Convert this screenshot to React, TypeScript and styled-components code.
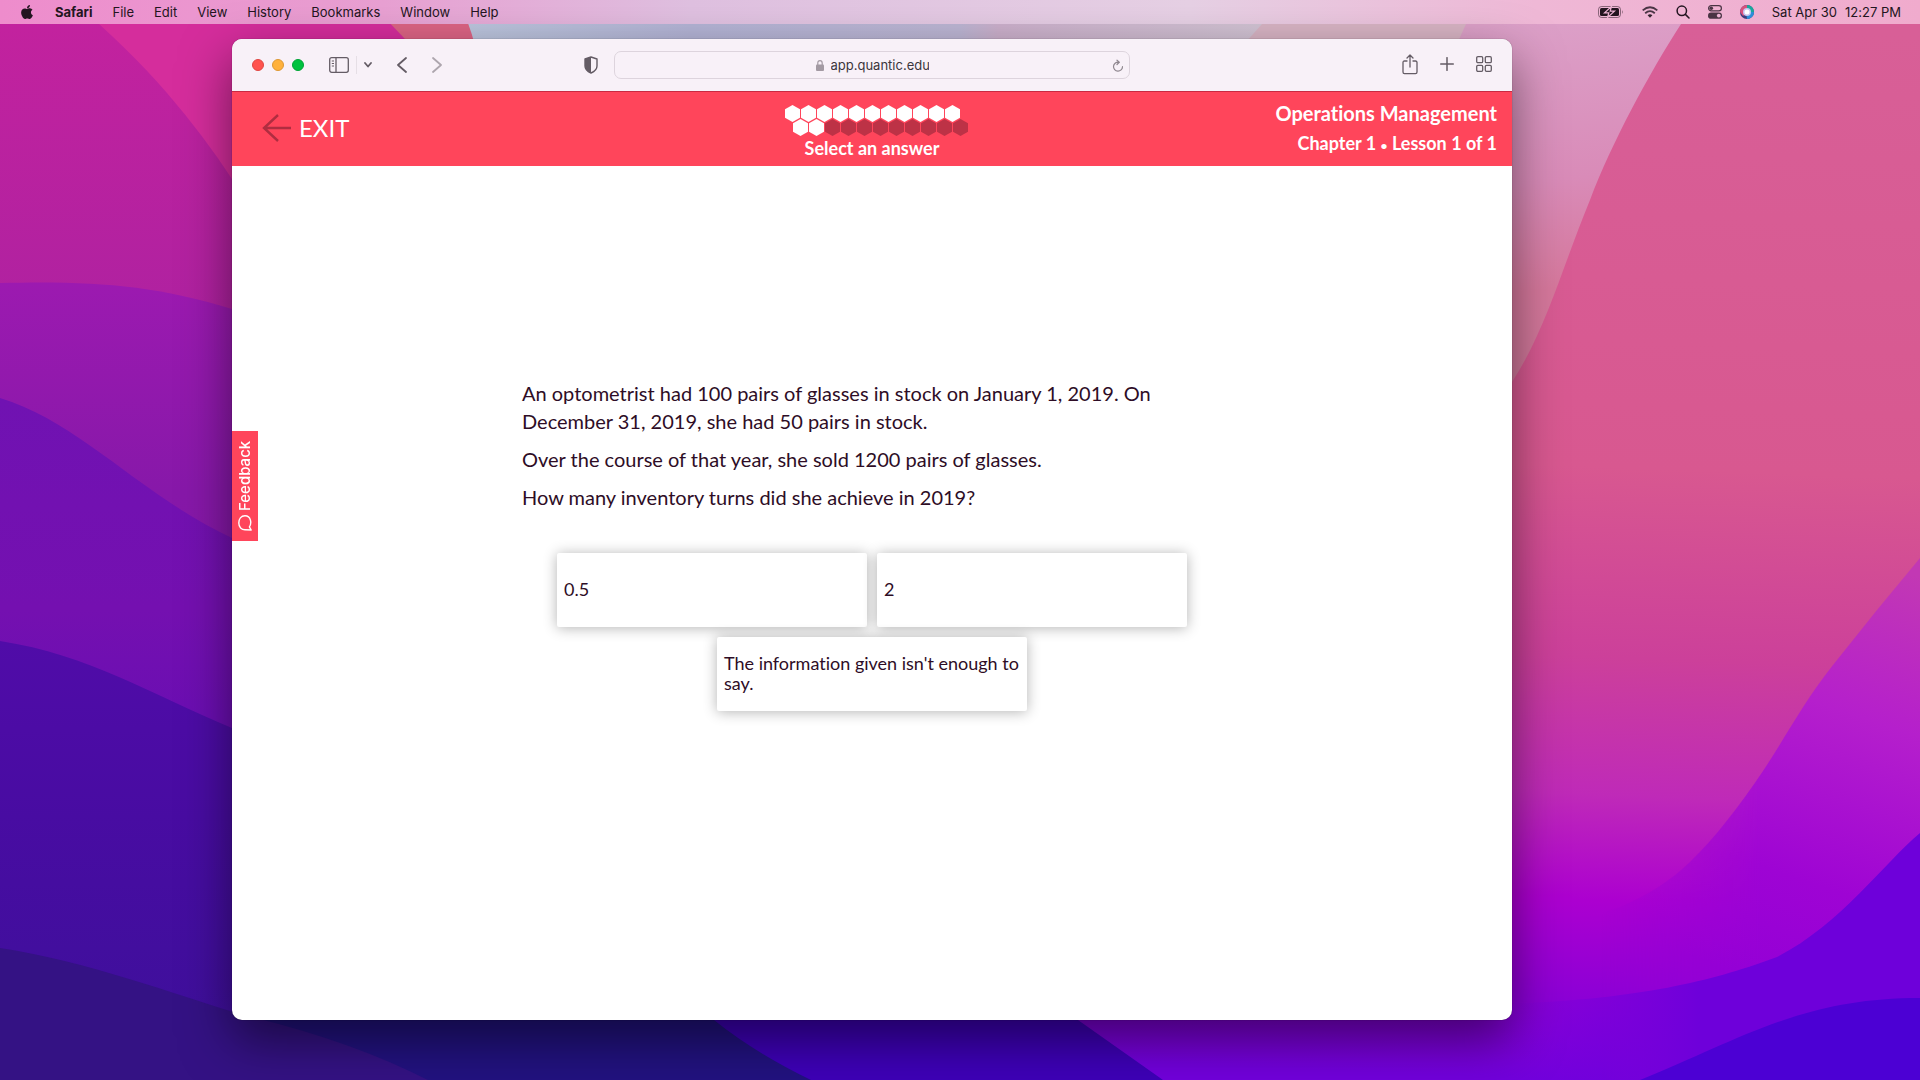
import React from "react";
import styled, { createGlobalStyle } from "styled-components";
import { FaApple } from "react-icons/fa";

const system = `Inter, "Liberation Sans", sans-serif`;
const course = `Lato, "Open Sans", sans-serif`;
const brand = "#ff455b";
const ink = "#2e0d26";

const GlobalStyle = createGlobalStyle`
  *, *::before, *::after { box-sizing: border-box; }
  body { margin: 0; font-family: ${system}; font-variant-ligatures: none; }
  button, input { font: inherit; color: inherit; }
  button { border: 0; padding: 0; background: none; cursor: pointer; font-variant-ligatures: none; }
  svg { display: block; flex: none; }
`;

const Desktop = styled.div`
  position: relative;
  isolation: isolate;
  display: flex;
  flex-direction: column;
  min-height: 100vh;
`;

const WallpaperArt = styled.svg`
  position: absolute;
  inset: 0;
  z-index: -1;
  width: 100%;
  height: 100%;
`;

const MenuBar = styled.header`
  display: flex;
  justify-content: space-between;
  align-items: center;
  height: 24px;
  padding: 0 19px 1px;
  color: #231520;
  font-size: 13px;
  background: linear-gradient(90deg, #ee8ccc 0%, #e8a0d2 20%, #dfc0e0 36%, #e6d0e4 62%, #efb8d6 80%, #f0abcd 100%);
`;

const MenuList = styled.nav`
  display: flex;
  align-items: center;
  gap: 20px;
`;

const MenuItem = styled.button<{ $strong?: boolean }>`
  font-weight: ${(p) => (p.$strong ? 700 : 400)};
  line-height: 22px;
`;

const StatusList = styled.div`
  display: flex;
  align-items: center;
  gap: 18px;
`;

const Clock = styled.time`
  display: flex;
  gap: 8px;
  line-height: 22px;
`;

const Stage = styled.div`
  flex: 1;
  display: flex;
  padding: 15px 408px 60px 232px;
`;

const BrowserWindow = styled.section`
  flex: 1;
  display: flex;
  flex-direction: column;
  overflow: hidden;
  min-width: 0;
  border-radius: 10px;
  background: #fff;
  box-shadow: 0 0 1px rgba(0, 0, 0, 0.6), 0 20px 50px rgba(0, 0, 0, 0.5);
`;

const Toolbar = styled.div`
  display: grid;
  grid-template-columns: 1fr minmax(0, 516px) 1fr;
  align-items: center;
  height: 52px;
  background: #f8f1f8;
  color: #645c65;
`;

const ToolGroup = styled.div<{ $end?: boolean }>`
  display: flex;
  align-items: center;
  justify-content: ${(p) => (p.$end ? "flex-end" : "space-between")};
  gap: 22px;
  padding: ${(p) => (p.$end ? "0 20px 2px" : "0 16px 0 20px")};
`;

const Cluster = styled.div<{ $gap: number }>`
  display: flex;
  align-items: center;
  gap: ${(p) => p.$gap}px;
`;

const Light = styled.button<{ $fill: string; $edge: string }>`
  width: 12px;
  height: 12px;
  border: 1px solid ${(p) => p.$edge};
  border-radius: 50%;
  background: ${(p) => p.$fill};
`;

const NavButton = styled.button<{ $muted?: boolean }>`
  opacity: ${(p) => (p.$muted ? 0.5 : 1)};
`;

const Rule = styled.span`
  width: 1px;
  height: 18px;
  background: #e6dfe6;
`;

const AddressBar = styled.div`
  display: grid;
  grid-template-columns: 1fr auto 1fr;
  align-items: center;
  height: 28px;
  padding: 0 5px;
  border: 1px solid #ddd4dd;
  border-radius: 7px;
`;

const AddressLabel = styled.label`
  grid-column: 2;
  display: flex;
  align-items: center;
  gap: 7px;
  color: #a39aa3;
`;

const AddressInput = styled.input`
  width: 98px;
  padding: 0;
  border: 0;
  outline: 0;
  background: none;
  color: #3c363c;
  font-size: 13px;
  line-height: 20px;
`;

const Reload = styled.button`
  justify-self: end;
  color: #8f878f;
`;

const LessonHeader = styled.header`
  display: grid;
  grid-template-columns: 1fr auto 1fr;
  align-items: center;
  height: 75px;
  padding: 0 15px 2px 30px;
  border-top: 1px solid #c92a42;
  background: ${brand};
  color: #fff;
  font-family: ${course};
`;

const Exit = styled.a`
  display: flex;
  align-items: center;
  gap: 8px;
  color: #fff;
  font-size: 24px;
  line-height: 28px;
  text-decoration: none;
`;

const Progress = styled.div`
  display: flex;
  flex-direction: column;
  align-items: center;
  gap: 1px;
  padding: 8px 15px 0 0;
  font-size: 18px;
  font-weight: 700;
  line-height: 22px;
`;

const Hexes = styled.svg`
  overflow: visible;
`;

const Course = styled.div`
  text-align: right;
  font-size: 18px;
  font-weight: 700;
  line-height: 30px;
`;

const CourseTitle = styled.h1`
  margin: 0;
  font-size: 20px;
  line-height: 30px;
`;

const Bullet = styled.span`
  font-size: 12px;
  line-height: 20px;
`;

const LessonBody = styled.main`
  position: relative;
  flex: 1;
  padding: 213px 20px 20px;
  color: ${ink};
  font-family: ${course};
`;

const Feedback = styled.button`
  position: absolute;
  top: 265px;
  left: 0;
  display: flex;
  align-items: center;
  justify-content: center;
  gap: 4px;
  width: 26px;
  height: 110px;
  background: ${brand};
  color: #fff;
  font-family: ${system};
  font-size: 15px;
  font-weight: 500;
  line-height: 26px;
  writing-mode: vertical-rl;
  transform: rotate(180deg);
`;

const Question = styled.div`
  max-width: 700px;
  margin: 0 auto;
  font-size: 20px;
  line-height: 28px;

  p {
    max-width: 640px;
    margin: 0 0 10px;
  }
`;

const Answers = styled.div`
  display: flex;
  flex-wrap: wrap;
  justify-content: center;
  gap: 10px;
  max-width: 640px;
  margin: 42px auto 0;
`;

const Answer = styled.button`
  width: 310px;
  height: 74px;
  padding: 0 7px 2px;
  border-radius: 2px;
  background: #fff;
  box-shadow: 0 1px 14px rgba(0, 0, 0, 0.3);
  text-align: left;
  font-size: 18px;
  line-height: 20px;
`;

const Wallpaper = () => (
  <WallpaperArt viewBox="0 0 1920 1080" preserveAspectRatio="none" aria-hidden="true">
    <defs>
      <linearGradient id="sky" x1="0" x2="1" y1="0" y2="0">
        <stop offset="0.24" stopColor="#bcc6de" />
        <stop offset="0.36" stopColor="#b4b4d6" />
        <stop offset="0.5" stopColor="#bdb6d4" />
        <stop offset="0.52" stopColor="#ccb0cc" />
        <stop offset="0.66" stopColor="#d2c4d4" />
      </linearGradient>
      <linearGradient id="haze" gradientUnits="userSpaceOnUse" x1="1500" y1="24" x2="1540" y2="380">
        <stop offset="0" stopColor="#dca0c8" />
        <stop offset="0.45" stopColor="#d98bb8" />
        <stop offset="0.75" stopColor="#d6789c" />
        <stop offset="1" stopColor="#d0789a" />
      </linearGradient>
      <linearGradient id="rose" gradientUnits="userSpaceOnUse" x1="1640" y1="24" x2="1600" y2="1080">
        <stop offset="0" stopColor="#d85f97" />
        <stop offset="0.42" stopColor="#d85890" />
        <stop offset="0.6" stopColor="#cc409a" />
        <stop offset="0.73" stopColor="#bf2ab8" />
        <stop offset="0.83" stopColor="#ac00d0" />
        <stop offset="0.9" stopColor="#9400d4" />
        <stop offset="1" stopColor="#7200dc" />
      </linearGradient>
      <linearGradient id="orchid" gradientUnits="userSpaceOnUse" x1="1900" y1="570" x2="1760" y2="980">
        <stop offset="0" stopColor="#c238b4" />
        <stop offset="0.35" stopColor="#b51fcc" />
        <stop offset="0.75" stopColor="#9e04d4" />
        <stop offset="1" stopColor="#9400d6" />
      </linearGradient>
      <linearGradient id="orchidReveal" gradientUnits="userSpaceOnUse" x1="1600" y1="0" x2="1760" y2="0">
        <stop offset="0" stopColor="#000" />
        <stop offset="1" stopColor="#fff" />
      </linearGradient>
      <mask id="orchidMask" maskUnits="userSpaceOnUse" x="1500" y="0" width="420" height="1080">
        <rect x="1500" width="420" height="1080" fill="url(#orchidReveal)" />
      </mask>
      <linearGradient id="violet" gradientUnits="userSpaceOnUse" x1="1500" y1="0" x2="1700" y2="0">
        <stop offset="0" stopColor="#7600dc" stopOpacity="0" />
        <stop offset="1" stopColor="#6e00da" />
      </linearGradient>
      <linearGradient id="berry" x1="0" x2="0" y1="0" y2="1">
        <stop offset="0" stopColor="#c4229e" />
        <stop offset="1" stopColor="#a321a2" />
      </linearGradient>
      <linearGradient id="plum" x1="0" x2="0" y1="0" y2="1">
        <stop offset="0" stopColor="#9c1ab0" />
        <stop offset="0.5" stopColor="#8718a9" />
        <stop offset="1" stopColor="#8418a6" />
      </linearGradient>
      <linearGradient id="grape" x1="0" x2="0" y1="0" y2="1">
        <stop offset="0" stopColor="#7012b2" />
        <stop offset="0.5" stopColor="#7410b0" />
        <stop offset="1" stopColor="#620cb4" />
      </linearGradient>
      <linearGradient id="indigo" x1="0" x2="0" y1="0" y2="1">
        <stop offset="0" stopColor="#500ca8" />
        <stop offset="0.4" stopColor="#480ca2" />
        <stop offset="1" stopColor="#3c109a" />
      </linearGradient>
    </defs>
    <rect width="1920" height="1080" fill="url(#sky)" />
    <path d="M1285 0L1262 24L1230 60V400H1600V0Z" fill="#d8b4c4" />
    <path d="M1476 0L1466 24L1445 70V500H1760V0Z" fill="url(#haze)" />
    <path d="M0 0H455C466 15 476 36 480 80V1080H0Z" fill="#dc6484" />
    <path d="M0 0H365Q400 30 440 80V1080H0Z" fill="#d52d9c" />
    <path d="M0 0H72Q130 50 167 93T232 179L330 280V500H0Z" fill="url(#berry)" />
    <path d="M0 283C90 281 150 284 232 309L330 340V700H0Z" fill="url(#plum)" />
    <path d="M0 398C80 422 140 495 232 538L330 580V820H0Z" fill="url(#grape)" />
    <path d="M0 641C90 655 150 694 232 728L330 770V1080H0Z" fill="url(#indigo)" />
    <path d="M1700 0L1681 24C1650 72 1612 142 1590 200C1562 268 1545 332 1512 382L1300 560L900 900V1080H1920V0Z" fill="url(#rose)" />
    <path d="M1920 558L1877 610L1833 665C1805 700 1785 738 1763 771C1740 805 1715 838 1690 862C1650 900 1600 920 1540 925V1080H1920Z" fill="url(#orchid)" mask="url(#orchidMask)" />
    <path d="M1500 1004C1640 1000 1715 980 1777 957C1840 925 1885 862 1920 833V1080H1500Z" fill="url(#violet)" />
    <path d="M1640 1080C1740 1040 1800 998 1920 998V1080Z" fill="#4c00d4" />
    <path d="M600 940H980L1078 1020L1163 1080H600Z" fill="#3e00b8" />
    <path d="M240 960H640L714 1020Q755 1053 811 1080H240Z" fill="#221280" />
    <path d="M0 948C90 962 170 993 240 1014Q350 1040 428 1080H0Z" fill="#341284" />
  </WallpaperArt>
);

const Battery = () => (
  <svg width="26" height="12" viewBox="0 0 26 12">
    <rect x="0.5" y="0.5" width="22" height="11" rx="3" fill="none" stroke="#231520" strokeOpacity="0.5" />
    <rect x="2" y="2" width="19" height="8" rx="1.5" fill="#231520" />
    <path d="M13.500 0.500L6.500 6.800H10.800L9.500 11.500L16.500 5.200H12.200Z" fill="#231520" stroke="#edb4d4" strokeWidth="1.200" />
    <path d="M24 4Q25.500 6 24 8Z" fill="#231520" fillOpacity="0.6" />
  </svg>
);

const Wifi = () => (
  <svg width="16" height="12" viewBox="0 0 16 12" fill="none" stroke="#4a3444" strokeWidth="1.8">
    <path d="M0.700 4.400Q8 -2 15.300 4.400M3.200 7.200Q8 3 12.800 7.200" />
    <path d="M8 11.800L5.600 9.200Q8 7.400 10.400 9.200Z" fill="#33232f" stroke="none" />
  </svg>
);

const Search = () => (
  <svg width="14" height="14" viewBox="0 0 14 14" fill="none" stroke="#231520" strokeWidth="1.5" strokeLinecap="round">
    <circle cx="5.800" cy="5.800" r="4.700" />
    <path d="M9.400 9.400L13 13" />
  </svg>
);

const Controls = () => (
  <svg width="14" height="14" viewBox="0 0 14 14" fill="#4a3444">
    <rect x="0.600" y="0.700" width="12.800" height="5.200" rx="2.600" fill="none" stroke="#4a3444" strokeWidth="1.200" />
    <circle cx="3.300" cy="3.300" r="1.800" />
    <rect y="7.500" width="14" height="6.300" rx="3.150" />
    <circle cx="10.800" cy="10.600" r="1.900" fill="#edb4d4" />
  </svg>
);

const Siri = () => (
  <svg width="14" height="14" viewBox="0 0 14 14">
    <circle cx="7" cy="7" r="7" fill="#3a3c7c" />
    <path d="M7 0A7 7 0 0 1 14 7L7 8Z" fill="#18a99c" />
    <path d="M7 0A7 7 0 0 0 0 7L3 11L7 8Z" fill="#d8507c" />
    <path d="M14 7A7 7 0 0 1 7 14L6 7Z" fill="#2c8fd8" />
    <circle cx="7" cy="7" r="4" fill="#c8c4ee" />
    <circle cx="7" cy="7" r="2.500" fill="#fff" />
  </svg>
);

const Sidebar = () => (
  <svg width="20" height="16" viewBox="0 0 20 16" fill="none" stroke="currentColor" strokeWidth="1.300">
    <rect x="0.700" y="0.700" width="18.600" height="14.600" rx="2" />
    <path d="M7 1V15" />
    <path d="M2.800 4H5M2.800 6.500H5M2.800 9H5" strokeWidth="1" />
  </svg>
);

const Chevron = ({ d, w, h }: { d: string; w: number; h: number }) => (
  <svg width={w} height={h} viewBox={`0 0 ${w} ${h}`} fill="none" stroke="currentColor" strokeWidth="1.800" strokeLinecap="round" strokeLinejoin="round">
    <path d={d} />
  </svg>
);

const Shield = () => (
  <svg width="14" height="18" viewBox="0 0 14 18">
    <path d="M7 1L13 3V10Q13 14.500 7 17Q1 14.500 1 10V3Z" fill="none" stroke="currentColor" strokeWidth="1.400" strokeLinejoin="round" />
    <path d="M7 1V17Q1 14.500 1 10V3Z" fill="currentColor" />
  </svg>
);

const Lock = () => (
  <svg width="8" height="11" viewBox="0 0 8 11">
    <rect y="4.500" width="8" height="6.500" rx="1" fill="currentColor" />
    <path d="M1.800 5V3Q1.800 0.700 4 0.700T6.200 3V5" fill="none" stroke="currentColor" strokeWidth="1.200" />
  </svg>
);

const ReloadIcon = () => (
  <svg width="12" height="13" viewBox="0 0 12 13" fill="none" stroke="currentColor" strokeWidth="1.200" strokeLinecap="round">
    <path d="M6.500 3.200A4.500 4.500 0 1 0 10.500 7.700M5 1.200L7.300 3.300L5 5.500" />
  </svg>
);

const Share = () => (
  <svg width="16" height="21" viewBox="0 0 16 21" fill="none" stroke="currentColor" strokeWidth="1.300" strokeLinecap="round" strokeLinejoin="round">
    <path d="M5 7H2.500Q1 7 1 8.500V18Q1 19.700 2.500 19.700H13.500Q15 19.700 15 18V8.500Q15 7 13.500 7H11M8 13V1M5 4L8 1L11 4" />
  </svg>
);

const Plus = () => (
  <svg width="14" height="14" viewBox="0 0 14 14" stroke="currentColor" strokeWidth="1.500" strokeLinecap="round">
    <path d="M7 0.700V13.300M0.700 7H13.300" />
  </svg>
);

const Tiles = () => (
  <svg width="16" height="16" viewBox="0 0 16 16" fill="none" stroke="currentColor" strokeWidth="1.300">
    {[0.7, 9.3].map((x) => [0.7, 9.3].map((y) => <rect key={`${x}${y}`} x={x} y={y} width="6" height="6" rx="1.200" />))}
  </svg>
);

const BackArrow = () => (
  <svg width="29" height="28" viewBox="0 0 29 28" fill="none" stroke="#b02d40" strokeWidth="2.400">
    <path d="M16 1L2 14L16 27M2 14H29" />
  </svg>
);

/* Drawn upside down, because the feedback tab that holds it is rotated by half a turn. */
const Bubble = () => (
  <svg width="14" height="16" viewBox="0 0 14 16" fill="none" stroke="currentColor" strokeWidth="1.400" strokeLinejoin="round">
    <path d="M0.800 1L2.600 4.200C0.200 7.500 0.800 15.200 7 15.200C11 15.200 13.200 12 13.200 8C13.200 4 10.500 1.200 7 1.200Z" />
  </svg>
);

const ROW = 11;
const COMPLETE = 13;

const HexProgress = () => (
  <Hexes width="175" height="31" viewBox="0 0 175 31" role="img" aria-label="13 of 22 steps">
    {Array.from({ length: ROW * 2 }, (_, i) => {
      const x = (i % ROW) * 16 + (i < ROW ? 0 : 8);
      const y = i < ROW ? 0 : 14;
      return (
        <path
          key={i}
          d="M7.500 0L15 4.200V12.800L7.500 17L0 12.800V4.200Z"
          transform={`translate(${x} ${y})`}
          fill={i < COMPLETE ? "#fff" : "#bd3246"}
        />
      );
    })}
  </Hexes>
);

const MENUS = ["File", "Edit", "View", "History", "Bookmarks", "Window", "Help"];
const ANSWERS = ["0.5", "2", "The information given isn't enough to say."];

export default function App() {
  return (
    <>
      <GlobalStyle />
      <Desktop>
        <Wallpaper />
        <MenuBar>
          <MenuList>
            <FaApple size={16} aria-label="Apple menu" />
            <MenuItem $strong>Safari</MenuItem>
            {MENUS.map((name) => (
              <MenuItem key={name}>{name}</MenuItem>
            ))}
          </MenuList>
          <StatusList>
            <Battery />
            <Wifi />
            <Search />
            <Controls />
            <Siri />
            <Clock>
              <span>Sat Apr 30</span>
              <span>12:27 PM</span>
            </Clock>
          </StatusList>
        </MenuBar>

        <Stage>
          <BrowserWindow>
            <Toolbar>
              <ToolGroup>
                <Cluster $gap={25}>
                  <Cluster $gap={8}>
                    <Light $fill="#ff534e" $edge="#df4643" aria-label="Close" />
                    <Light $fill="#ffb13c" $edge="#dd9834" aria-label="Minimize" />
                    <Light $fill="#00c23f" $edge="#00a436" aria-label="Zoom" />
                  </Cluster>
                  <Cluster $gap={7}>
                    <NavButton aria-label="Sidebar"><Sidebar /></NavButton>
                    <Rule />
                    <NavButton aria-label="Tab groups"><Chevron w={8} h={6} d="M1 1L4 4.500L7 1" /></NavButton>
                  </Cluster>
                  <Cluster $gap={25}>
                    <NavButton aria-label="Back"><Chevron w={10} h={16} d="M9 1L1 8L9 15" /></NavButton>
                    <NavButton $muted aria-label="Forward"><Chevron w={10} h={16} d="M1 1L9 8L1 15" /></NavButton>
                  </Cluster>
                </Cluster>
                <NavButton aria-label="Privacy report"><Shield /></NavButton>
              </ToolGroup>
              <AddressBar>
                <AddressLabel>
                  <Lock />
                  <AddressInput aria-label="Address" defaultValue="app.quantic.edu" />
                </AddressLabel>
                <Reload aria-label="Reload"><ReloadIcon /></Reload>
              </AddressBar>
              <ToolGroup $end>
                <NavButton aria-label="Share"><Share /></NavButton>
                <NavButton aria-label="New tab"><Plus /></NavButton>
                <NavButton aria-label="Tab overview"><Tiles /></NavButton>
              </ToolGroup>
            </Toolbar>

            <LessonHeader>
              <Exit href="#exit">
                <BackArrow />
                EXIT
              </Exit>
              <Progress>
                <HexProgress />
                <span>Select an answer</span>
              </Progress>
              <Course>
                <CourseTitle>Operations Management</CourseTitle>
                Chapter 1 <Bullet>•</Bullet> Lesson 1 of 1
              </Course>
            </LessonHeader>

            <LessonBody>
              <Feedback>
                <Bubble />
                Feedback
              </Feedback>
              <Question>
                <p>
                  An optometrist had 100 pairs of glasses in stock on January 1, 2019. On December 31, 2019, she had 50
                  pairs in stock.
                </p>
                <p>Over the course of that year, she sold 1200 pairs of glasses.</p>
                <p>How many inventory turns did she achieve in 2019?</p>
              </Question>
              <Answers>
                {ANSWERS.map((text) => (
                  <Answer key={text}>{text}</Answer>
                ))}
              </Answers>
            </LessonBody>
          </BrowserWindow>
        </Stage>
      </Desktop>
    </>
  );
}
